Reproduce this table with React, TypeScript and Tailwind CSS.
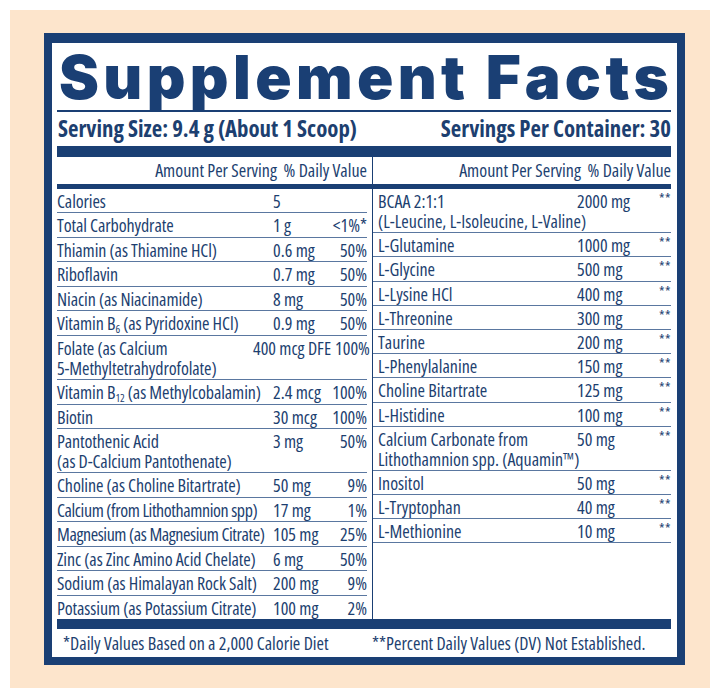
import type { ReactNode } from "react"

type Row = {
  name: ReactNode
  amount: string
  dv?: string
  shift?: boolean
  tight?: boolean
}

const leftRows: Row[] = [
  { name: "Calories", amount: "5", dv: "" },
  { name: "Total Carbohydrate", amount: "1 g", dv: "<1%*" },
  { name: "Thiamin (as Thiamine HCl)", amount: "0.6 mg", dv: "50%" },
  { name: "Riboflavin", amount: "0.7 mg", dv: "50%" },
  { name: "Niacin (as Niacinamide)", amount: "8 mg", dv: "50%" },
  {
    name: (
      <>
        Vitamin B<sub className="text-[11px] align-baseline relative top-[3px]">6</sub> (as Pyridoxine HCl)
      </>
    ),
    amount: "0.9 mg",
    dv: "50%"
  },
  {
    name: (
      <>
        Folate (as Calcium
        <br />
        5-Methyltetrahydrofolate)
      </>
    ),
    amount: "400 mcg DFE",
    dv: "100%",
    shift: true
  },
  {
    name: (
      <>
        Vitamin B<sub className="text-[11px] align-baseline relative top-[3px]">12</sub> (as Methylcobalamin)
      </>
    ),
    amount: "2.4 mcg",
    dv: "100%"
  },
  { name: "Biotin", amount: "30 mcg", dv: "100%" },
  {
    name: (
      <>
        Pantothenic Acid
        <br />
        (as D-Calcium Pantothenate)
      </>
    ),
    amount: "3 mg",
    dv: "50%"
  },
  { name: "Choline (as Choline Bitartrate)", amount: "50 mg", dv: "9%" },
  { name: "Calcium (from Lithothamnion spp)", amount: "17 mg", dv: "1%", tight: true },
  { name: "Magnesium (as Magnesium Citrate)", amount: "105 mg", dv: "25%", tight: true },
  { name: "Zinc (as Zinc Amino Acid Chelate)", amount: "6 mg", dv: "50%" },
  { name: "Sodium (as Himalayan Rock Salt)", amount: "200 mg", dv: "9%" },
  { name: "Potassium (as Potassium Citrate)", amount: "100 mg", dv: "2%" }
]

const rightRows: Row[] = [
  {
    name: (
      <>
        BCAA 2:1:1
        <br />
        (L-Leucine, L-Isoleucine, L-Valine)
      </>
    ),
    amount: "2000 mg"
  },
  { name: "L-Glutamine", amount: "1000 mg" },
  { name: "L-Glycine", amount: "500 mg" },
  { name: "L-Lysine HCl", amount: "400 mg" },
  { name: "L-Threonine", amount: "300 mg" },
  { name: "Taurine", amount: "200 mg" },
  { name: "L-Phenylalanine", amount: "150 mg" },
  { name: "Choline Bitartrate", amount: "125 mg" },
  { name: "L-Histidine", amount: "100 mg" },
  {
    name: (
      <>
        Calcium Carbonate from
        <br />
        Lithothamnion spp. (Aquamin™)
      </>
    ),
    amount: "50 mg"
  },
  { name: "Inositol", amount: "50 mg" },
  { name: "L-Tryptophan", amount: "40 mg" },
  { name: "L-Methionine", amount: "10 mg" }
]

function LeftRow({ row, last }: { row: Row; last: boolean }) {
  return (
    <div
      className={`grid grid-cols-[216px_1fr_auto] items-start pt-[2px] pb-[1.45px] leading-[20px] ${
        last ? "" : "border-b border-[#5a77a0]"
      }`}
    >
      <div className={row.tight ? "whitespace-nowrap tracking-[-0.4px]" : "whitespace-nowrap tracking-[-0.1px]"}>
        {row.name}
      </div>
      <div className={row.shift ? "-ml-[20px] whitespace-nowrap" : "whitespace-nowrap"}>{row.amount}</div>
      <div className="text-right whitespace-nowrap pl-1">{row.dv}</div>
    </div>
  )
}

function RightRow({ row }: { row: Row }) {
  return (
    <div className="grid grid-cols-[199px_1fr_auto] items-start pt-[2px] pb-[1.2px] pl-[5px] leading-[20px] border-b border-[#5a77a0]">
      <div className="whitespace-nowrap">{row.name}</div>
      <div className="whitespace-nowrap">{row.amount}</div>
      <div className="text-[14px] leading-[16px] tracking-[0.5px]">**</div>
    </div>
  )
}

export default function App() {
  return (
    <div className="w-[727px] h-[698px] bg-white pt-[10px] pl-[10px]">
      <div className="w-[700px] h-[678px] bg-[#fde5cc] pt-[23px] pl-[34px]">
        <div className="w-[641px] h-[632px] border-[8px] border-t-[10px] border-[#1a3f74] bg-white px-[5px] pr-[6px] text-[#1d3f70] font-['Open_Sans',sans-serif] font-stretch-condensed">
          <h1 className="font-['Inter',sans-serif] font-black font-stretch-normal text-[60px] leading-[64px] pt-[2px] pl-[2px] text-[#1a3f74] tracking-[4.4px] whitespace-nowrap">
            Supplement Facts
          </h1>
          <div className="border-b-2 border-[#1a3f74] mt-[1px]" />
          <div className="flex justify-between items-center h-[34px] pl-[1px] text-[22.8px] font-bold leading-none whitespace-nowrap">
            <span>Serving Size: 9.4 g (About 1 Scoop)</span>
            <span>Servings Per Container: 30</span>
          </div>
          <div className="h-[11px] bg-[#1a3f74]" />
          <div className="grid grid-cols-[315px_1fr] text-[18px]">
            <div className="h-[27px] flex items-center justify-end pr-[5px] whitespace-nowrap">
              Amount Per Serving&nbsp;&nbsp;% Daily Value
            </div>
            <div className="h-[27px] flex items-center justify-end border-l-[1.5px] border-[#1a3f74] whitespace-nowrap">
              Amount Per Serving&nbsp;&nbsp;% Daily Value
            </div>
          </div>
          <div className="h-[5px] bg-[#1a3f74]" />
          <div className="grid grid-cols-[315px_1fr] text-[18px]">
            <div className="pr-[5px]">
              {leftRows.map((r, i) => (
                <LeftRow key={i} row={r} last={i === leftRows.length - 1} />
              ))}
            </div>
            <div className="border-l-[1.5px] border-[#1a3f74]">
              {rightRows.map((r, i) => (
                <RightRow key={i} row={r} />
              ))}
            </div>
          </div>
          <div className="h-[10px] bg-[#1a3f74]" />
          <div className="grid grid-cols-[315px_1fr] text-[18px] h-[29px] items-center">
            <div className="pl-[6px] whitespace-nowrap">*Daily Values Based on a 2,000 Calorie Diet</div>
            <div className="whitespace-nowrap">**Percent Daily Values (DV) Not Established.</div>
          </div>
        </div>
      </div>
    </div>
  )
}
